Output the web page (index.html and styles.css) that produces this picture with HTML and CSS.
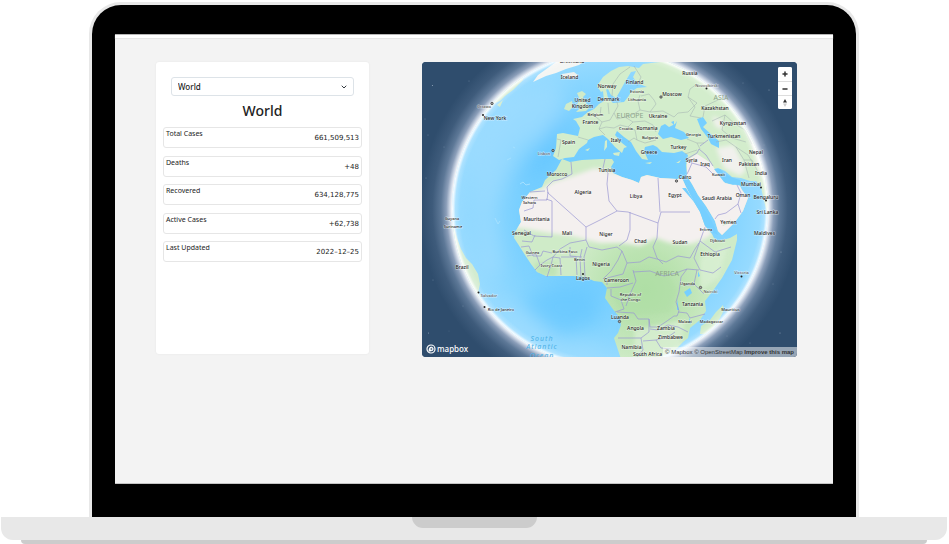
FILE: index.html
```html
<!DOCTYPE html>
<html lang="en">
<head>
<meta charset="utf-8">
<meta name="viewport" content="width=device-width, initial-scale=1">
<title>World cases</title>
<link rel="stylesheet" href="styles.css">
</head>
<body>
<div class="laptop">
  <div class="lid">
    <div class="screen">
      <header class="topbar"></header>
      <main class="dashboard">
        <section class="card">
          <div class="picker">
            <select class="country" aria-label="Country"><option>World</option></select>
            <svg class="chevron" viewBox="0 0 8 8" aria-hidden="true"><path d="M2 3 4 5 6 3"/></svg>
          </div>
          <h1 class="title">World</h1>
          <dl class="stats">
            <div class="stat"><dt>Total Cases</dt><dd>661,509,513</dd></div>
            <div class="stat"><dt>Deaths</dt><dd>+48</dd></div>
            <div class="stat"><dt>Recovered</dt><dd>634,128,775</dd></div>
            <div class="stat"><dt>Active Cases</dt><dd>+62,738</dd></div>
            <div class="stat"><dt>Last Updated</dt><dd>2022–12–25</dd></div>
          </dl>
        </section>
        <section class="map">
          <svg class="globe" viewBox="422 62 375 295" preserveAspectRatio="xMidYMid slice" role="img" aria-label="Globe">
            <defs>
              <radialGradient id="halo" gradientUnits="userSpaceOnUse" cx="610" cy="209" r="190">
                <stop offset="0.83" stop-color="#fff"/>
                <stop offset="0.843" stop-color="#cfd8e6"/>
                <stop offset="0.862" stop-color="#8b9eb9"/>
                <stop offset="0.89" stop-color="#5d7897"/>
                <stop offset="0.935" stop-color="#3e5b7b"/>
                <stop offset="1" stop-color="#2f4d6d"/>
              </radialGradient>
              <radialGradient id="sea" gradientUnits="userSpaceOnUse" cx="610" cy="209" r="158">
                <stop offset="0" stop-color="#6dcbff"/>
                <stop offset="0.5" stop-color="#75ceff"/>
                <stop offset="0.8" stop-color="#87d5ff"/>
                <stop offset="1" stop-color="#9bdcff"/>
              </radialGradient>
              <radialGradient id="rim" gradientUnits="userSpaceOnUse" cx="610" cy="209" r="158">
                <stop offset="0.95" stop-color="#fff" stop-opacity="0"/>
                <stop offset="0.978" stop-color="#fff" stop-opacity="0.2"/>
                <stop offset="0.99" stop-color="#fff" stop-opacity="0.7"/>
                <stop offset="1" stop-color="#fff"/>
              </radialGradient>
              <radialGradient id="forest" gradientUnits="userSpaceOnUse" cx="645" cy="290" r="75">
                <stop offset="0" stop-color="#b0dfa6"/>
                <stop offset="0.5" stop-color="#bbe3b1"/>
                <stop offset="1" stop-color="#cfebc8"/>
              </radialGradient>
              <clipPath id="disc"><circle cx="610" cy="209" r="158"/></clipPath>
              <clipPath id="africaShape"><use href="#africa"/></clipPath>
              <filter id="soft" x="-20%" y="-20%" width="140%" height="140%"><feGaussianBlur stdDeviation="2"/></filter>
              <filter id="wide" x="-40%" y="-40%" width="180%" height="180%"><feGaussianBlur stdDeviation="9"/></filter>
            </defs>
            <rect x="422" y="62" width="375" height="295" fill="#2f4d6d"/>
            <circle cx="610" cy="209" r="190" fill="url(#halo)"/>
            <g class="stars">
              <circle cx="432.500" cy="85.500" r=".6"/><circle cx="469" cy="81" r=".4"/><circle cx="425" cy="119" r=".4"/><circle cx="428" cy="135" r=".4"/><circle cx="444" cy="147" r=".4"/><circle cx="426" cy="178" r=".4"/><circle cx="433" cy="280" r=".4"/><circle cx="463" cy="306" r=".4"/><circle cx="428.500" cy="333" r=".5"/><circle cx="449" cy="331" r=".3"/><circle cx="743" cy="83" r=".4"/><circle cx="769" cy="90" r=".5"/><circle cx="764" cy="145" r=".4"/><circle cx="781" cy="252" r=".5"/><circle cx="773" cy="284" r=".4"/><circle cx="727" cy="336" r=".4"/><circle cx="780" cy="333" r=".5"/><circle cx="750" cy="343" r=".4"/>
            </g>
            <g clip-path="url(#disc)">
              <rect x="450" y="50" width="320" height="320" fill="url(#sea)"/>
              <g filter="url(#wide)">
                <path d="M470 150 500 100 560 80 565 125 520 150 495 210 505 280 480 270Z" fill="#a4deff" opacity=".6"/>
                <path d="M505 190 530 165 548 130 566 112 575 118 565 132 552 165Z" fill="#5bc2ff" opacity=".6"/>
                <path d="M520 300 560 285 595 290 600 320 560 335Z" fill="#5fc4ff" opacity=".6"/>
                <path d="M500 290 515 340 590 365 605 345 560 350Z" fill="#a4deff" opacity=".5"/>
              </g>
              <g class="shoals"><path d="M520 184l3-2 3 3 4-1M495 218l3 6 2-3M507 160l4-2M513 147l2 1M602 275l2 1"/></g>
              <path fill="#f4f5f3" d="M533 82 538 75 545 70 556 62 566 58 590 58 579 65 566 69 556 73 546 76Z"/>
              <path fill="#eef1ee" d="M562 74 574 72 579 76 572 79 563 78Z"/>
              <path fill="#d3ecd0" d="M480 118 488 110 495 103 500 101 505 96 513 90 523 80 520 72 480 100ZM497 105 503 100 500 107Z"/>
              <path fill="#d3ecd0" d="M446 222 454 228 457 238 461 249 466 258 472 264 478 274 480 284 478 293 481 301 488 312 470 315 440 260Z"/>
              <path fill="#d0ebc9" d="M577 93 582 91 586 94 583 97 586 103 590 107 586 111 576 112 580 108 577 104 580 100ZM566 104 572 101 573 107 569 111 564 109Z"/>
              <path class="land" d="M557 134 563 133 578 136 580 128 576 121 573 119 582 117 588 112 594 109 599 104 604 101 603 91 606 89 608 98 613 103 624 102 628 97 631 92 637 88 647 87 637 83 633 77 636 71 631 72 625 82 620 91 616 98 611 95 608 89 601 92 597 86 603 77 611 71 619 67 628 66 639 68 643 64 660 62 664 50 790 60 790 260 768 215 764 201 761 187 756 181 750 181 741 178 732 177 725 171 718 168 714 169 719 174 725 183 733 185 739 184 742 190 748 198 743 211 735 222 722 235 718 231 715 221 706 206 698 195 692 184 687 176 686 165 688 155 682 151 674 153 662 152 657 147 653 145 645 147 644 151 648 160 642 159 636 151 631 142 624 137 617 131 615 135 622 143 627 147 624 148 622 153 615 147 608 139 603 135 594 137 588 140 587 143 579 149 574 157 565 158 559 160 553 156 556 148Z"/>
              <path id="africa" d="M562 159 570 162 582 160 602 159 612 159 614 162 611 167 613 173 622 177 632 180 639 183 641 177 647 175 660 178 677 179 682 178 686 187 694 202 700 212 705 226 712 234 714 238 719 241 730 238 737 234 737 240 732 260 722 278 712 292 705 301 706 311 700 320 690 328 688 338 683 342 676 349 665 355 655 365 623 365 617 347 614 338 618 333 621 325 620 318 612 308 605 298 607 288 602 282 594 281 585 277 573 276 558 276 546 276 537 272 531 264 525 255 518 244 514 238 515 232 521 222 519 210 522 202 530 192 542 187 545 180 556 170Z" fill="url(#forest)"/>
              <g clip-path="url(#africaShape)">
                <path fill="#f4f0ef" filter="url(#soft)" d="M500 196 540 190 553 182 573 176 595 168 606 171 618 173 695 172 712 235 702 240 690 244 670 243 656 238 640 246 622 243 600 243 588 240 572 236 550 233 527 229 505 226Z"/>
                <path fill="#aedda4" filter="url(#soft)" opacity=".5" d="M534 263 556 262 557 276 538 276ZM608 288 630 268 668 272 677 290 670 312 625 316Z"/>
                <path fill="#d9efd3" filter="url(#soft)" opacity=".8" d="M634 330 685 320 680 350 635 360ZM700 258 728 246 718 278 700 292Z"/>
              </g>
              <path fill="#f4f0ef" d="M687 160 697 154 711 163 714 168 719 174 725 183 733 185 739 184 742 190 748 198 743 211 735 222 722 235 718 231 715 221 706 206 698 195 692 184 687 176Z"/>
              <path fill="#f1f1ed" filter="url(#soft)" d="M716 148 734 145 746 170 740 176 724 168ZM712 116 722 120 722 130 715 126ZM748 130 762 150 768 190 757 165Z"/>
              <path fill="#cdeac7" d="M722 226 731 219 728 224Z"/>
              <path fill="#76cfff" d="M658 134 661 126 665 124 669 127 675 124 677 121 675 128 684 132 689 138 681 140 671 137 663 139ZM697 119 703 117 707 123 703 127 712 135 719 141 719 148 711 144 708 138 701 129ZM671 122 674 121 674 125ZM645 149 653 147 651 152ZM682 188 686 188 694 201 703 207 710 218 716 230 718 235 712 232 705 226 700 212 694 202ZM714 169 720 169 725 174 733 178 740 180 742 186 737 185 731 184 724 182Z"/>
              <path fill="#76cfff" d="M684 292 690 288 692 293 687 297ZM677 299 679 310 677 310ZM698 271 700 276 698 277ZM689 317 691 324 689 323Z"/>
              <path fill="#d3edcc" d="M605 141 607 140 607 147 604 151ZM613 153 620 152 619 156 614 155ZM645 163 652 162 650 164ZM676 163 681 160 679 163ZM585 150 590 148 588 151Z"/>
              <path fill="#cfebc8" d="M700 334 701 326 710 320 716 312 723 305 724 310 720 318 713 328 705 334Z"/>
              <g class="borders">
                <path d="M571 162 572 174 562 179 553 181 547 187 548 193 586 227 600 220 617 211 628 212 658 223 661 212 690 212M608 173 607 184 609 201 617 211M605 159 603 168 608 173M658 178 660 212M630 212 630 230 627 240 619 246M658 223 657 238 653 247 657 258 663 264M552 201 552 237 534 236 524 230M552 201 546 199M524 211 533 208 534 200 547 200 548 192M530 192 545 191M586 227 586 240 570 243 560 249 553 257"/>
                <path d="M586 240 589 247 602 250 617 247 622 251 618 260 611 271 603 279M522 241 532 242 535 235M521 247 529 246 533 256 541 256 543 251 552 253M527 256 536 254 540 265 535 270M540 265 547 260 553 257 560 258 561 275M553 257 551 265 547 277M561 257 576 257 577 275M582 249 580 258 581 277M587 247 584 257 585 277M570 247 570 256 582 257M622 251 627 263 623 274 607 278 607 285M627 263 640 262 649 257 657 259 666 262 678 256 690 258 695 249 699 243M633 283 620 287 607 288M611 289 611 296 621 300 624 309 615 312M633 270 636 281 630 294 626 306M633 272 650 271 664 276 676 273 687 269M705 227 700 241 715 252 731 247M700 241 694 258 700 270 713 273 721 267M687 269 681 277 679 292 676 302 679 311 677 316M687 269 699 270M697 270 694 284 704 294M684 285 694 285M678 312 687 313 690 318 705 314M617 312 634 313 638 319 649 319 650 327 658 327 667 321 674 316 677 316M649 319 649 332 641 338 618 338M650 329 658 330 668 325 678 327 688 332M641 338 643 350 637 357M643 341 656 340 668 337 675 332M656 340 661 348 671 349"/>
                <path d="M685 160 697 153 699 149M688 160 692 163 689 170 687 174M692 163 706 167 713 174M737 185 741 193 738 204 726 213 718 215M738 204 741 213M699 149 706 155 713 166M700 146 708 140M718 215 715 219"/>
              </g>
              <g class="thin">
                <path d="M557 139 561 140 558 157M578 137 588 140M589 113 596 117 602 122 599 129 605 135M599 129 606 127 614 128 620 125 628 127 633 122 625 117 617 119 614 113 618 106M602 122 610 120 614 113M628 127 635 130 637 140 645 143 656 140M633 122 645 121 653 125 656 132M625 117 634 114 640 110 650 112 663 111 674 117 678 113 688 112 697 103 688 97 690 89 697 84M640 110 638 101 640 95M628 142 634 138 637 140M688 97 695 107 690 116 701 118M618 106 617 102M637 86 641 77 634 66M612 96 613 84 620 74 630 67M687 139 697 143 704 143M697 143 700 149M716 142 726 140 736 147 744 160 749 178M736 147 748 155 754 165M712 121 725 115 735 124 745 130 752 144M703 117 705 106 718 100 725 95M725 115 722 130 732 138 746 142M744 160 752 160 758 172M685 154 697 150M654 100 649 94 641 96M650 112 656 104 654 100M608 103 609 114M601 107 600 116"/>
              </g>
            </g>
            <circle cx="610" cy="209" r="158" fill="url(#rim)"/>
            <g class="places">
              <text x="572" y="63">Greenland</text><text x="569.500" y="79">Iceland</text><text x="607" y="88">Norway</text><text x="634.500" y="84">Finland</text><text x="690" y="75">Russia</text><text x="672" y="96">Moscow</text><text x="608.500" y="101">Denmark</text><text x="582.500" y="102">United</text><text x="582.500" y="108">Kingdom</text><text x="590.500" y="124">France</text><text x="658" y="118">Ukraine</text><text x="647" y="130">Romania</text><text x="616" y="142">Italy</text><text x="568.500" y="144">Spain</text><text x="649" y="154">Greece</text><text x="678.500" y="149">Turkey</text><text x="715" y="110">Kazakhstan</text><text x="733" y="125">Kyrgyzstan</text><text x="724" y="138">Turkmenistan</text><text x="756" y="154">Nepal</text><text x="691.500" y="162">Syria</text><text x="705" y="166">Iraq</text><text x="727" y="162">Iran</text><text x="749" y="166">Pakistan</text><text x="761" y="175">India</text><text x="751" y="186">Mumbai</text><text x="743" y="197">Oman</text><text x="766" y="199">Bengaluru</text><text x="767.500" y="214">Sri Lanka</text><text x="764.500" y="235">Maldives</text><text x="607" y="172">Tunisia</text><text x="557" y="176">Morocco</text><text x="583" y="194">Algeria</text><text x="636" y="198">Libya</text><text x="675" y="197">Egypt</text><text x="685" y="179">Cairo</text><text x="717" y="200">Saudi Arabia</text><text x="728.500" y="224">Yemen</text><text x="536.500" y="221">Mauritania</text><text x="567" y="235">Mali</text><text x="606" y="236">Niger</text><text x="640.500" y="243">Chad</text><text x="680" y="244">Sudan</text><text x="521.500" y="235">Senegal</text><text x="601" y="266">Nigeria</text><text x="583" y="280">Lagos</text><text x="616.500" y="282">Cameroon</text><text x="710" y="256">Ethiopia</text><text x="692.500" y="306">Tanzania</text><text x="635.500" y="330">Angola</text><text x="666" y="330">Zambia</text><text x="670.500" y="339">Zimbabwe</text><text x="631.500" y="349">Namibia</text><text x="647.500" y="356">South Africa</text><text x="620" y="319">Luanda</text><text x="495" y="120">New York</text><text x="462" y="269">Brazil</text>
            </g>
            <g class="places minor">
              <text x="595.500" y="116">Belgium</text><text x="637" y="93">Estonia</text><text x="637" y="101">Lithuania</text><text x="626" y="130">Croatia</text><text x="650" y="139">Bulgaria</text><text x="693.500" y="136">Georgia</text><text x="718.500" y="176">Kuwait</text><text x="529.500" y="199">Western</text><text x="529.500" y="204">Sahara</text><text x="532.500" y="254">Guinea</text><text x="565" y="253">Burkina Faso</text><text x="579.500" y="261">Benin</text><text x="551.500" y="267">Ivory Coast</text><text x="706" y="231">Eritrea</text><text x="717.500" y="242">Djibouti</text><text x="687.500" y="285">Uganda</text><text x="630.500" y="296">Republic of</text><text x="630.500" y="301">the Congo</text><text x="685" y="323">Malawi</text><text x="711.500" y="323">Madagascar</text><text x="730.500" y="311">Mauritius</text><text x="452" y="220">Guyana</text><text x="453" y="228">Suriname</text><text x="501" y="311">Rio de Janeiro</text>
            </g>
            <g class="places minor faded">
              <text x="706.500" y="87">Novosibirsk</text><text x="484" y="108">Ottawa</text><text x="544" y="155">Lisbon</text><text x="741.500" y="274">Victoria</text><text x="710.500" y="293">Nairobi</text><text x="489" y="297">Salvador</text>
            </g>
            <g class="region"><text x="630" y="118">EUROPE</text><text x="721" y="100">ASIA</text><text x="667" y="276">AFRICA</text></g>
            <g class="ocean"><text x="542" y="341">South</text><text x="542" y="349">Atlantic</text><text x="542" y="358">Ocean</text></g>
            <g class="cities">
              <circle cx="706.500" cy="88.500" r="1"/><circle cx="483" cy="115" r="1"/><circle cx="761" cy="187.500" r="1"/><circle cx="766" cy="200.500" r="1"/><circle cx="583" cy="274" r="1"/><circle cx="478.500" cy="292.500" r="1"/><circle cx="484.500" cy="307" r="1"/><circle cx="741.500" cy="276.500" r="1"/>
            </g>
            <g class="capitals">
              <circle cx="661" cy="97" r="1.200"/><circle cx="492" cy="103.500" r="1.200"/><circle cx="553" cy="150.500" r="1.200"/><circle cx="676.500" cy="181" r="1.200"/><circle cx="700.500" cy="287.500" r="1.200"/><circle cx="619.500" cy="321.500" r="1.200"/>
            </g>
          </svg>
          <div class="controls">
            <button type="button" aria-label="Zoom in"><svg viewBox="0 0 14 14"><path class="sign" d="M5 7h4M7 5v4"/></svg></button>
            <button type="button" aria-label="Zoom out"><svg viewBox="0 0 14 14"><path class="sign" d="M5 7h4"/></svg></button>
            <button type="button" aria-label="Reset north"><svg viewBox="0 0 14 14"><path fill="#333" d="M5 6.500 7 3l2 3.500Z"/><path fill="#ccc" d="M5 7.500 7 11l2-3.500Z"/></svg></button>
          </div>
          <a class="logo" href="#"><svg viewBox="0 0 10 10" aria-hidden="true"><circle cx="5" cy="5" r="4" fill="none" stroke="#fff" stroke-width="1.200"/><path fill="#fff" d="M2.700 7.400C2.500 5 3.200 3.600 4.300 3c1.300-.7 2.700 0 3.100 1.200.4 1.300-.3 2.400-1.400 2.900-.9.4-2.100.5-3.300.3Z"/><path fill="#4b6582" d="m5.300 3.500.5 1 1 .5-1 .5-.5 1-.5-1-1-.5 1-.5Z"/></svg><span>mapbox</span></a>
          <div class="credit"><a href="#">© Mapbox</a> <a href="#">© OpenStreetMap</a> <a class="improve" href="#">Improve this map</a></div>
        </section>
      </main>
    </div>
  </div>
  <div class="base"><div class="notch"></div></div>
  <div class="foot"></div>
</div>
</body>
</html>
```
FILE: styles.css
```css
* { box-sizing: border-box; }
body { margin: 0; background: #fff; color: #222; font-family: "Noto Sans", "Open Sans", sans-serif; }
.laptop { display: flex; flex-direction: column; padding: 2px 2px 0 1px; overflow: hidden; }
.lid { margin: 0 88px; padding: 29px 23px 33px; background: #000; border: 3px solid #e8e8e8; border-bottom: 0; border-radius: 32px 32px 0 0; }
.screen { min-height: 450px; background: #f3f3f3; border-bottom: 1px solid #c4c4c4; }
.topbar { height: 4px; background: #fff; border-top: 1px solid #b5b5b5; box-shadow: 0 1px 1px #e4e4e4; }
.dashboard { display: grid; grid-template-columns: 213fr 375fr; gap: 53px; align-items: start; padding: 24px 36px 24px 41px; }
.card { min-height: 292px; padding: 15px 7px; background: #fff; border-radius: 3px; box-shadow: 0 0 2px #e4e4e4; }
.picker { position: relative; margin: 0 8px; }
.country { display: block; width: 100%; height: 19px; padding: 0 6px; appearance: none; background: #fff; border: 1px solid #dde3e8; border-radius: 3px; color: #222; font: 500 8px/17px "Noto Sans", sans-serif; }
.chevron { position: absolute; top: 6px; right: 6px; width: 8px; height: 8px; pointer-events: none; }
.chevron path { fill: none; stroke: #343a40; stroke-width: 1; stroke-linecap: round; stroke-linejoin: round; }
.title { margin: 5px 0 6px; font-size: 14px; line-height: 20px; font-weight: 500; text-align: center; }
.stats { display: grid; align-content: space-between; min-height: 135px; margin: 0; }
.stat { display: flex; justify-content: space-between; height: 21px; padding: 1px 2px; border: 1px solid #e6e6e6; border-radius: 3px; font-size: 7px; line-height: 10px; }
.stat dd { margin: 0; line-height: 18px; font-family: "DejaVu Sans", sans-serif; }
.map { position: relative; overflow: hidden; border-radius: 4px; aspect-ratio: 375 / 295; background: #2f4d6d; }
.globe { display: block; width: 100%; height: 100%; }
.land { fill: #d3edcc; }
.stars { fill: #91a5bb; }
.shoals { fill: none; stroke: #a5e0ff; stroke-width: 1; }
.borders { fill: none; stroke: #9a97d2; stroke-width: .7; stroke-linejoin: round; }
.thin { fill: none; stroke: #a0aeb0; stroke-width: .5; stroke-linejoin: round; }
.places { fill: #222; stroke: #fff; stroke-opacity: .5; stroke-width: 1px; paint-order: stroke; text-anchor: middle; font-family: "Noto Sans", sans-serif; font-size: 5px; font-weight: 500; }
.minor { font-size: 4px; }
.faded { fill: #555; }
.region { fill: #8ca38a; text-anchor: middle; font-family: "Noto Sans", sans-serif; font-size: 7px; }
.ocean { fill: #4bb0e6; text-anchor: middle; font-family: "Noto Sans", sans-serif; font-size: 7px; font-style: italic; letter-spacing: 1px; }
.cities { fill: #222; }
.capitals { fill: #aaa; stroke: #333; stroke-width: .7; }
.controls { position: absolute; top: 5px; right: 5px; width: 14px; background: #fff; border-radius: 2px; overflow: hidden; }
.controls button { display: block; width: 14px; height: 14px; padding: 0; border: 0; background: #fff; }
.controls button + button { border-top: 1px solid #ddd; }
.controls svg { display: block; width: 14px; height: 14px; }
.sign { fill: none; stroke: #333; stroke-width: 1.5; stroke-linecap: round; }
.logo { position: absolute; left: 4px; bottom: 3px; display: flex; align-items: center; gap: 1px; color: #fff; font: 500 8px/10px "Noto Sans", sans-serif; text-decoration: none; }
.logo svg { width: 10px; height: 10px; }
.credit { position: absolute; right: 0; bottom: 0; padding: 0 3px 0 2px; background: rgba(255, 255, 255, .5); font: 6px/10px "Liberation Sans", sans-serif; white-space: nowrap; }
.credit a { color: #333; text-decoration: none; }
.credit .improve { font-weight: 700; }
.base { height: 23px; background: #e8e8e8; border-radius: 0 0 12px 12px; }
.notch { width: 125px; height: 11px; margin: 0 auto; background: #ccc; border-radius: 0 0 11px 11px; }
.foot { height: 4px; margin: 0 20px; background: #ccc; border-radius: 0 0 4px 4px; }
```
